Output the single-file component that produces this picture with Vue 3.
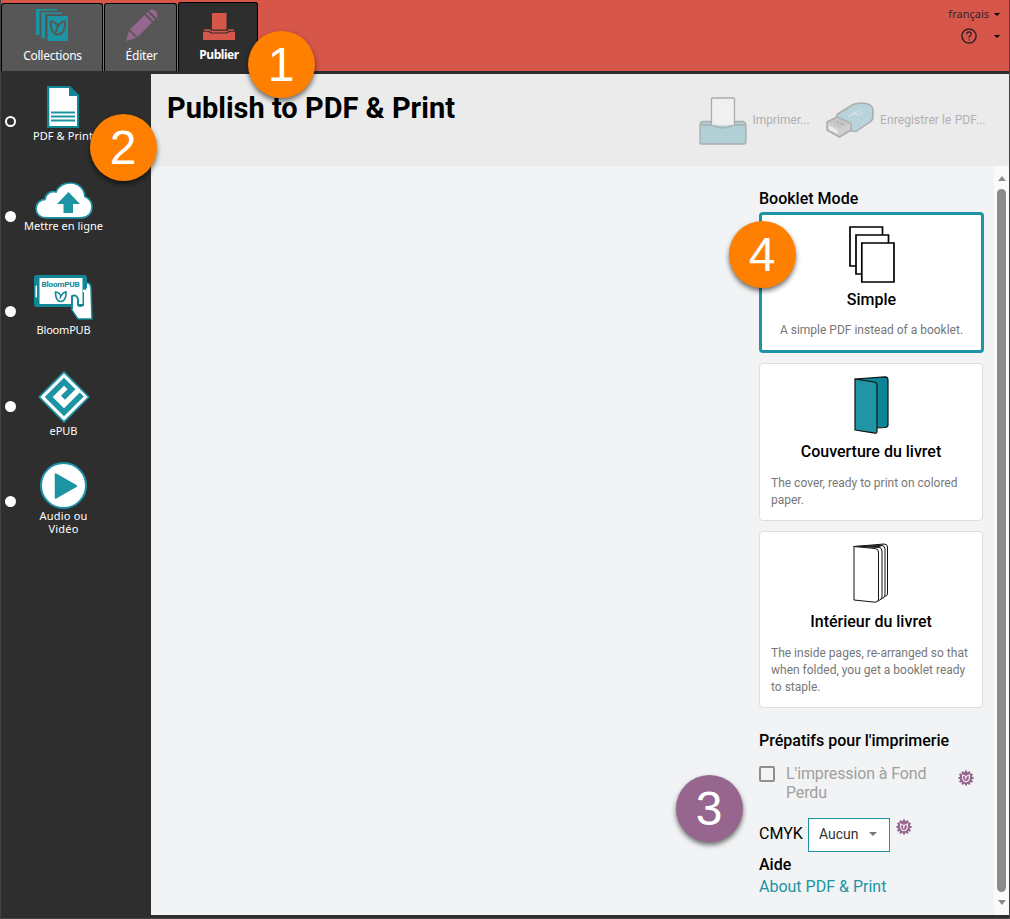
<script setup>
const modes = [
  { id: 'simple', title: 'Simple', text: 'A simple PDF instead of a booklet.' },
  { id: 'cover', title: 'Couverture du livret', text: 'The cover, ready to print on colored paper.' },
  { id: 'inside', title: 'Intérieur du livret', text: 'The inside pages, re-arranged so that when folded, you get a booklet ready to staple.' },
]
const teeth = Array.from({ length: 12 }, (_, i) => i * 30)
</script>

<template>
  <div class="window">
    <header class="topbar">
      <div class="tab collections">
        <svg width="33" height="33" viewBox="0 0 33 33">
          <path d="M0 0H21V1.500H3.500V26H0Z M5.500 3.500H26V5H9V29.500H5.500Z M11.500 7H32V32H11.500Z" fill="#1d94a4" />
          <path d="M15 12.500C18 12.500 20.500 14.500 22 17.500C23.500 14.500 26 12.500 29 12.500C29.500 20 27 25.500 22 25.500C17 25.500 14 20 15 12.500ZM22 17.500C20.500 20 20 22 20.500 23" fill="none" stroke="#575757" stroke-width="2" />
        </svg>
        <span>Collections</span>
      </div>
      <div class="tab edit">
        <svg width="32" height="33" viewBox="0 0 32 33">
          <path d="M0 32L3 22L10 29Z M4 20.500L18.500 6L26 13.500L11.500 28Z M20 4.500L21.500 3L29 10.500L27.500 12Z M23 1.800Q26-1.500 29.500 2Q33 5.500 30.500 9Z" fill="#96668f" />
        </svg>
        <span>Éditer</span>
      </div>
      <div class="tab publish">
        <svg width="32" height="27" viewBox="0 0 32 27">
          <path d="M9 0H23.500V16.500H9Z M1.500 16.300H7.500V17.800H25V16.300H30.500L31.500 17.800H26L23.500 19.500H8.500L6 17.800H.5Z M0 18.800H5L8 20.600H24L27 18.800H32V27H0Z" fill="#d65649" />
        </svg>
        <span>Publier</span>
      </div>
      <div class="account">
        <div class="acc-row"><span>français</span><i class="caret"></i></div>
        <div class="acc-row help">
          <svg width="16" height="16" viewBox="0 0 16 16" fill="none" stroke="#35232a">
            <circle cx="8" cy="8" r="7.100" stroke-width="1.500" />
            <path d="M5.700 6.300Q5.700 4 8 4Q10.300 4 10.300 6.100Q10.300 7.200 9 8.100Q8 8.800 8 10M8 11.200V12.500" stroke-width="1.300" />
          </svg>
          <i class="caret"></i>
        </div>
      </div>
    </header>

    <div class="body">
      <nav class="side">
        <div class="item pdf">
          <i class="radio open"></i>
          <div class="choice">
            <svg width="32" height="42" viewBox="0 0 32 42">
              <path d="M0 0H23L32 9V42H0Z" fill="#0f8797" />
              <path d="M2.300 2H22V10H30V40H2.300Z" fill="#fff" />
              <path d="M4 26.500H28M4 30.500H28M4 34.500H28" stroke="#1d94a4" stroke-width="2" />
            </svg>
            <span>PDF &amp; Print</span>
          </div>
        </div>
        <div class="item web">
          <i class="radio"></i>
          <div class="choice">
            <svg width="58" height="37" viewBox="0 0 58 37">
              <path d="M11 35.800C4.500 35.800 1 31.500 1 26.500C1 21.500 5 17.500 10 17.300C10.500 11.500 16 8.500 21 10C23.500 4.500 29 1 35.500 1C43.500 1 49.500 7 49.800 14.500C54.500 16.500 57 20.500 57 25C57 31 53 35.800 46.500 35.800Z" fill="#fff" stroke="#1d94a4" stroke-width="1.700" />
              <path d="M33.500 10L45 22H38V31H28.500V22H22Z" fill="#1d94a4" />
            </svg>
            <span>Mettre en ligne</span>
          </div>
        </div>
        <div class="item bloom">
          <i class="radio"></i>
          <div class="choice">
            <svg width="59" height="45" viewBox="0 0 59 45">
              <path d="M49 7L54 8Q57 9 57 13L58 44H44L38 35V25H48Z" fill="#fff" stroke="#0f8797" stroke-width="1.500" />
              <rect width="53" height="32" rx="3" fill="#0f8797" />
              <path d="M5.500 3H48.500V29H5.500Z" fill="#fff" />
              <path d="M1.500 11.500Q3 9 3 12V21Q3 24 1.500 22Z" fill="#fff" />
              <circle cx="50.200" cy="16" r="1.400" fill="#fff" />
              <path d="M38 33V21Q41.500 19 44.500 24V30L50 31V17L55 10L56.500 43H44.500L38.500 34.500Z" fill="#fff" />
              <path d="M38 34V21Q42.500 19 44 24V30Q46 32 49.500 30" fill="none" stroke="#0f8797" stroke-width="1.900" />
              <path d="M21.500 17C25 17.300 26 19 27 21C28 19 29.500 17.300 32 17C32.500 26.500 27 26.500 27 26.500C21 26.500 21.500 17 21.500 17ZM27 21Q26 22 26.300 23.500" fill="none" stroke="#0f8797" stroke-width="1.600" />
              <text x="7.500" y="12.300" textLength="38" lengthAdjust="spacingAndGlyphs" font-family="Roboto, sans-serif" font-size="7.700" font-weight="700" fill="#0f8797">BloomPUB</text>
            </svg>
            <span>BloomPUB</span>
          </div>
        </div>
        <div class="item epub">
          <i class="radio"></i>
          <div class="choice">
            <svg width="52" height="52" viewBox="0 0 52 52">
              <path d="M26 1.200L50.800 26L26 50.800L1.200 26Z" fill="#fff" stroke="#1d94a4" stroke-width="1.700" stroke-linejoin="round" />
              <path d="M43.800 23.500L26 41.300L10.700 26L26 10.700L33.500 18.200L25 26.700" fill="none" stroke="#1d94a4" stroke-width="5.600" />
            </svg>
            <span>ePUB</span>
          </div>
        </div>
        <div class="item audio">
          <i class="radio"></i>
          <div class="choice">
            <svg width="47" height="47" viewBox="0 0 47 47">
              <circle cx="23.500" cy="23.500" r="22.500" fill="#fff" stroke="#1d94a4" stroke-width="2" />
              <path d="M15.500 12L36.500 24L15.500 36Z" fill="#1d94a4" stroke="#1d94a4" stroke-width="1.500" stroke-linejoin="round" />
            </svg>
            <span>Audio ou<br>Vidéo</span>
          </div>
        </div>
      </nav>

      <main class="main">
        <div class="head">
          <h1>Publish to PDF &amp; Print</h1>
          <div class="action print">
            <svg width="48" height="48" viewBox="0 0 48 48" stroke="#acacac" stroke-width="1.300" stroke-linejoin="round">
              <path d="M1 28Q1 24.500 4.500 24.500H43Q46.500 24.500 47 28V45.500Q47 47 45.500 47H2.500Q1 47 1 45.500Z" fill="#b1d0d5" />
              <path d="M1.500 28H13Q24 34 34.500 28H46.500" fill="none" />
              <path d="M12.500 27.500V2Q12.500 1 13.500 1H34.500Q35.500 1 35.500 2V27.500" fill="#f0f0f0" />
              <path d="M13.200 27.500Q24 29.500 34.800 27.500V26H13.200Z" fill="#f0f0f0" stroke="none" />
            </svg>
            <span>Imprimer...</span>
          </div>
          <div class="action save">
            <svg width="48" height="36" viewBox="0 0 48 36" stroke="#acacac" stroke-width="1.500" stroke-linejoin="round">
              <path d="M11 17V12.500L27 2.500Q33 0 40 1.500L44 3Q47 5 47 9V15Q47 18 44 20L30 29.500L25 29Z" fill="#b8d3d9" />
              <path d="M1 20L11 15L25 21.500V28L13.500 35L1 28Z" fill="#d0d0d0" />
              <path d="M1.800 20.500L13 26.500L24.300 21.800L12 16Z" fill="#c6c6c6" stroke="none" />
              <path d="M3 23.500L11.500 28V32L3 27.500Z" fill="#ededed" stroke="none" />
              <path d="M11 20L13 21M15 21.500L17 22.500" stroke-width="1.600" />
              <path d="M22 15L37 7M25 13L28 10H31M28 12L33 13L37 10" fill="none" stroke="#d2e1e5" stroke-width="1.200" />
            </svg>
            <span>Enregistrer le PDF...</span>
          </div>
        </div>

        <div class="content">
          <aside class="options">
            <h2>Booklet Mode</h2>
            <section v-for="m in modes" :key="m.id" class="card" :class="m.id">
              <svg v-if="m.id === 'simple'" width="46" height="57" viewBox="0 0 46 57" fill="#fff" stroke="#000" stroke-width="1.700">
                <path d="M1 1H33.500V40H1Z" /><path d="M7 9H39.500V48H7Z" /><path d="M12.800 17H45V56H12.800Z" />
              </svg>
              <svg v-else-if="m.id === 'cover'" width="35" height="58" viewBox="0 0 35 58" stroke="#111" stroke-width="1.200" stroke-linejoin="round">
                <path d="M1 3L31 .8Q34 1 34 4V49Q34 51 31 51.500L22 52V7Z" fill="#0c8596" />
                <path d="M1 3L20 6Q23 6.500 23 9V55Q23 57.500 21 57.200L1 54Z" fill="#2095a5" />
              </svg>
              <svg v-else width="36" height="60" viewBox="0 0 36 60" fill="#fff" stroke="#111" stroke-width="1" stroke-linejoin="round">
                <path d="M1 3.500L31 1Q34.500 1 34.500 4V51Q34.500 53 31 53.500Z" />
                <path d="M1 3.500L29 2.500Q32 3 32 6V52Q32 55 28 56Z" />
                <path d="M1 3.500L26 4Q29 5 29 8V54Q29 56.500 25 58Z" />
                <path d="M1 3.500L22 5.500Q25.500 6 25.500 9V56Q25.500 59.500 22 59.200L1 57Z" />
                <path d="M3 3.500L31 1.500L25 5Z" fill="#222" stroke="none" />
              </svg>
              <h3>{{ m.title }}</h3>
              <p>{{ m.text }}</p>
            </section>

            <h2 class="prep">Prépatifs pour l'imprimerie</h2>
            <div class="bleed">
              <i class="box"></i>
              <span>L'impression à Fond Perdu</span>
              <svg class="badge" width="16" height="16" viewBox="-8 -8 16 16">
                <rect v-for="a in teeth" :key="a" x="-1" y="-7.600" width="2" height="4" fill="#96668f" :transform="`rotate(${a})`" />
                <circle r="6.200" fill="#96668f" />
                <path d="M-3.400-3Q-1-2.700 0-.8Q1-2.700 3.400-3Q3.900 3.600 0 3.600Q-3.900 3.600-3.400-3ZM0-.8Q-.8.500 0 1.500" fill="none" stroke="#f5eef4" stroke-width="1.200" />
              </svg>
            </div>
            <div class="cmyk">
              <span>CMYK</span>
              <div class="select"><span>Aucun</span><i></i></div>
              <svg class="badge" width="16" height="16" viewBox="-8 -8 16 16">
                <rect v-for="a in teeth" :key="a" x="-1" y="-7.600" width="2" height="4" fill="#96668f" :transform="`rotate(${a})`" />
                <circle r="6.200" fill="#96668f" />
                <path d="M-3.400-3Q-1-2.700 0-.8Q1-2.700 3.400-3Q3.900 3.600 0 3.600Q-3.900 3.600-3.400-3ZM0-.8Q-.8.500 0 1.500" fill="none" stroke="#f5eef4" stroke-width="1.200" />
              </svg>
            </div>
            <h2 class="aide">Aide</h2>
            <a class="link">About PDF &amp; Print</a>
          </aside>
          <div class="scroll">
            <i class="up"></i>
            <div class="thumb"></div>
            <i class="down"></i>
          </div>
        </div>
      </main>
    </div>

    <div class="callout c1">1</div>
    <div class="callout c2">2</div>
    <div class="callout c3">3</div>
    <div class="callout c4">4</div>
  </div>
</template>

<style scoped>
* { box-sizing: border-box; }
h1, h2, h3, p { margin: 0; }
svg { display: block; flex: none; }
.window { position: relative; width: 1010px; height: 919px; display: flex; flex-direction: column; overflow: hidden; background: #2e2e2e; border: solid #444; border-width: 0 1px 1px; font-family: Roboto, sans-serif; }
.topbar { height: 71px; flex: none; display: flex; align-items: flex-end; background: #d65649; font-family: "Noto Sans", sans-serif; }
.tab { height: 68px; display: flex; flex-direction: column; align-items: center; background: #575757; border: 1px solid #000; border-bottom: 0; border-radius: 3px 3px 0 0; color: #fff; font-size: 12px; line-height: 16px; }
.tab span { white-space: nowrap; }
.collections { width: 102px; margin-right: 1px; padding: 5px 0 0 1px; letter-spacing: -.25px; }
.collections span, .edit span { margin-top: 6px; }
.edit { width: 73px; margin-right: 1px; padding: 5px 0 0 2px; letter-spacing: -.2px; }
.publish { width: 80px; height: 69px; background: #2e2e2e; padding: 10px 0 0 2px; font-weight: 700; letter-spacing: -.45px; }
.publish span { margin-top: 7px; }
.account { margin-left: auto; align-self: flex-start; width: 66px; padding: 6px 9px 0 0; color: #35232a; font-size: 11px; line-height: 16px; }
.acc-row { display: flex; align-items: center; justify-content: flex-end; gap: 5px; height: 16px; }
.help { margin-top: 6px; gap: 17px; }
.caret { border: solid transparent; border-width: 3px 3px 0; border-top-color: #000; }
.body { flex: 1; display: flex; padding: 3px 0 3px; min-height: 0; }
.side { width: 150px; flex: none; }
.item { height: 95px; position: relative; display: flex; color: #fff; font: 11px/13px "Noto Sans", sans-serif; letter-spacing: 0; }
.radio { width: 11px; height: 11px; margin: 42px 0 0 4px; border-radius: 50%; background: #fff; flex: none; }
.radio.open { background: none; border: 2px solid #fff; }
.choice { width: 95px; display: flex; flex-direction: column; align-items: center; text-align: center; white-space: nowrap; }
.pdf .choice { width: 94px; padding-top: 12px; letter-spacing: .1px; }
.web .choice { padding-top: 13px; }
.bloom .choice { padding-top: 11px; letter-spacing: -.2px; }
.epub .choice { padding-top: 12px; }
.audio .choice { padding-top: 8px; letter-spacing: .2px; }
.pdf .choice span { margin-top: 1px; }
.bloom .choice span { margin-top: 3px; }
.epub .choice span { margin-top: 1px; }
.main { flex: 1; display: flex; flex-direction: column; min-width: 0; background: #f1f3f4; }
.head { height: 92px; flex: none; display: flex; align-items: flex-start; background: #ebebeb; padding-left: 16px; }
h1 { width: 531.500px; padding-top: 16px; font-size: 29px; line-height: 36px; font-weight: 700; color: #000; white-space: nowrap; }
.action { display: flex; align-items: center; height: 92px; font-size: 12px; color: #b0b0b0; white-space: nowrap; }
.print { width: 127.500px; gap: 6px; }
.print svg { margin-top: 1px; }
.save { gap: 6px; letter-spacing: .1px; }
.content { flex: 1; display: flex; justify-content: flex-end; min-height: 0; }
.options { width: 225px; margin-right: 10px; padding-top: 23px; color: #000; }
h2 { font-size: 16px; line-height: 20px; font-weight: 500; white-space: nowrap; }
.card { width: 224px; background: #fff; border: 1px solid #dedede; border-radius: 4px; display: flex; flex-direction: column; align-items: center; margin-bottom: 10px; }
.card h3 { font-size: 16px; line-height: 20px; font-weight: 500; }
.card p { align-self: stretch; padding: 0 10px 0 11px; font-size: 12px; line-height: 17px; color: #777; }
.simple { width: 225px; height: 141px; margin-top: 3px; border: 3px solid #1d94a4; padding-top: 11px; }
.simple h3 { margin-top: 7px; }
.simple p { margin-top: 12px; padding: 0; text-align: center; }
.cover { height: 158px; padding-top: 12px; }
.cover h3 { margin-top: 8px; }
.cover p { margin-top: 13px; }
.inside { height: 177px; padding-top: 11px; margin-bottom: 0; }
.inside h3 { margin-top: 9px; }
.inside p { margin-top: 13px; }
.prep { margin-top: 23px; }
.bleed { display: flex; align-items: flex-start; margin-top: 13px; font-size: 16px; line-height: 19px; color: #a0a0a0; }
.box { width: 16px; height: 16px; margin-top: 2px; border: 2px solid #8f8f8f; border-radius: 2px; flex: none; }
.bleed span { width: 145px; margin-left: 11px; letter-spacing: -.13px; }
.bleed .badge { margin: 6px 0 0 27px; }
.cmyk { display: flex; align-items: flex-start; margin-top: 16px; height: 34px; font-size: 16px; }
.cmyk > span { width: 49px; line-height: 32px; }
.select { width: 82px; height: 34px; border: 1px solid #1d94a4; background: #fff; display: flex; align-items: center; justify-content: space-between; padding: 0 12px 2px 10px; font-size: 14px; color: #333; }
.select i { border: solid transparent; border-width: 4px 4px 0; border-top-color: #777; }
.cmyk .badge { margin: 1px 0 0 6px; }
.aide { margin-top: 3px; }
.link { display: block; margin-top: 1px; font-size: 16px; line-height: 22px; color: #1d94a4; }
.scroll { width: 15px; background: #fafafa; display: flex; flex-direction: column; align-items: center; padding: 10px 0; }
.up { border: solid transparent; border-width: 0 4.500px 5px; border-bottom-color: #8b8b8b; }
.down { border: solid transparent; border-width: 5px 4.500px 0; border-top-color: #8b8b8b; }
.thumb { flex: 1; width: 9px; margin: 8px 0; border-radius: 5px; background: #8b8b8b; }
.callout { position: absolute; width: 67px; height: 67px; border-radius: 50%; background: #ff8000; color: #fff; font: 48px/67px "Liberation Sans", sans-serif; text-align: center; box-shadow: 0 3px 5px rgba(0, 0, 0, .55); }
.c1 { left: 246.500px; top: 30.500px; }
.c2 { left: 88.500px; top: 113.500px; }
.c3 { left: 674.500px; top: 775px; background: #96668f; }
.c4 { left: 727.500px; top: 221px; }
</style>
